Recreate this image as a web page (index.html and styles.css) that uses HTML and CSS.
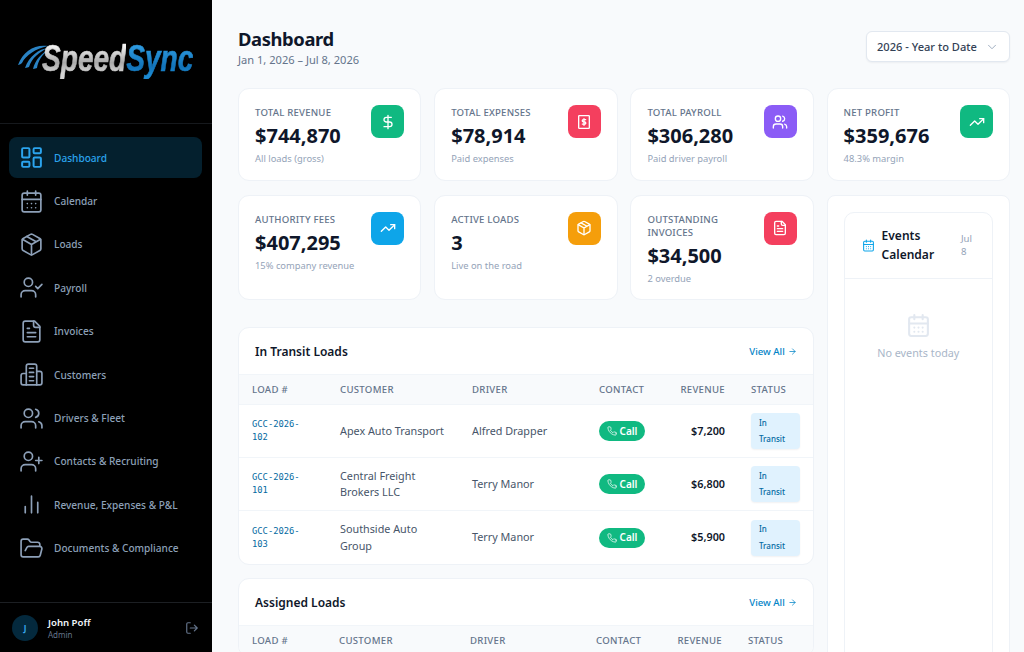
FILE: index.html
```html
<!DOCTYPE html>
<html lang="en">
<head>
    <meta charset="UTF-8">
    <meta name="viewport" content="width=device-width, initial-scale=1.0">
    <title>SpeedSync Dashboard</title>
    <link rel="stylesheet" href="styles.css">
</head>
<body>
    <!-- Icon sprite -->
    <svg class="sprite" xmlns="http://www.w3.org/2000/svg">
        <symbol id="i-dashboard" viewBox="0 0 24 24"><rect x="3" y="3" width="7" height="9" rx="1"/><rect x="14" y="3" width="7" height="5" rx="1"/><rect x="14" y="12" width="7" height="9" rx="1"/><rect x="3" y="16" width="7" height="5" rx="1"/></symbol>
        <symbol id="i-calendar" viewBox="0 0 24 24"><path d="M8 2v4M16 2v4"/><rect x="3" y="4" width="18" height="18" rx="2"/><path d="M3 10h18M8 14h.01M12 14h.01M16 14h.01M8 18h.01M12 18h.01M16 18h.01"/></symbol>
        <symbol id="i-box" viewBox="0 0 24 24"><path d="M21 8a2 2 0 0 0-1-1.73l-7-4a2 2 0 0 0-2 0l-7 4A2 2 0 0 0 3 8v8a2 2 0 0 0 1 1.73l7 4a2 2 0 0 0 2 0l7-4A2 2 0 0 0 21 16Z"/><path d="m7.5 4.27 9 5.15M3.29 7 12 12l8.71-5M12 22V12"/></symbol>
        <symbol id="i-user-check" viewBox="0 0 24 24"><path d="M16 21v-2a4 4 0 0 0-4-4H6a4 4 0 0 0-4 4v2"/><circle cx="9" cy="7" r="4"/><path d="m16 11 2 2 4-4"/></symbol>
        <symbol id="i-file" viewBox="0 0 24 24"><path d="M15 2H6a2 2 0 0 0-2 2v16a2 2 0 0 0 2 2h12a2 2 0 0 0 2-2V7Z"/><path d="M14 2v4a2 2 0 0 0 2 2h4M10 9H8M16 13H8M16 17H8"/></symbol>
        <symbol id="i-building" viewBox="0 0 24 24"><path d="M7 22V4a2 2 0 0 1 2-2h6a2 2 0 0 1 2 2v18Z"/><path d="M7 11H4a2 2 0 0 0-2 2v7a2 2 0 0 0 2 2h3M17 9h3a2 2 0 0 1 2 2v9a2 2 0 0 1-2 2h-3M10 6h4M10 10h4M10 14h4M10 18h4"/></symbol>
        <symbol id="i-users" viewBox="0 0 24 24"><path d="M16 21v-2a4 4 0 0 0-4-4H6a4 4 0 0 0-4 4v2"/><circle cx="9" cy="7" r="4"/><path d="M22 21v-2a4 4 0 0 0-3-3.87M16 3.13a4 4 0 0 1 0 7.75"/></symbol>
        <symbol id="i-user-plus" viewBox="0 0 24 24"><path d="M16 21v-2a4 4 0 0 0-4-4H6a4 4 0 0 0-4 4v2"/><circle cx="9" cy="7" r="4"/><path d="M19 8v6M22 11h-6"/></symbol>
        <symbol id="i-chart" viewBox="0 0 24 24"><path d="M18 20V10M12 20V4M6 20v-6"/></symbol>
        <symbol id="i-folder" viewBox="0 0 24 24"><path d="m6 14 1.5-2.9A2 2 0 0 1 9.24 10H20a2 2 0 0 1 1.94 2.5l-1.54 6a2 2 0 0 1-1.95 1.5H4a2 2 0 0 1-2-2V5a2 2 0 0 1 2-2h3.9a2 2 0 0 1 1.69.9l.81 1.2a2 2 0 0 0 1.67.9H18a2 2 0 0 1 2 2v2"/></symbol>
        <symbol id="i-logout" viewBox="0 0 24 24"><path d="M9 21H5a2 2 0 0 1-2-2V5a2 2 0 0 1 2-2h4M16 17l5-5-5-5M21 12H9"/></symbol>
        <symbol id="i-dollar" viewBox="0 0 24 24"><path d="M12 2v20M17 5H9.500a3.500 3.500 0 0 0 0 7h5a3.500 3.500 0 0 1 0 7H6"/></symbol>
        <symbol id="i-receipt" viewBox="0 0 24 24"><rect x="4" y="2.500" width="16" height="19" rx="1"/><path d="M14.500 8.500h-3.500a1.600 1.600 0 0 0 0 3.300h2a1.600 1.600 0 0 1 0 3.300H9.500M12 7v10"/></symbol>
        <symbol id="i-trend" viewBox="0 0 24 24"><path d="M22 7l-8.500 8.500-5-5L2 17"/><path d="M16 7h6v6"/></symbol>
        <symbol id="i-chevron" viewBox="0 0 24 24"><path d="m6 9 6 6 6-6"/></symbol>
        <symbol id="i-arrow" viewBox="0 0 24 24"><path d="M5 12h14M12 5l7 7-7 7"/></symbol>
        <symbol id="i-phone" viewBox="0 0 24 24"><path d="M22 16.920v3a2 2 0 0 1-2.180 2 19.790 19.790 0 0 1-8.630-3.070 19.500 19.500 0 0 1-6-6 19.790 19.790 0 0 1-3.070-8.670A2 2 0 0 1 4.110 2h3a2 2 0 0 1 2 1.720c.13.96.36 1.900.7 2.810a2 2 0 0 1-.45 2.110L8.090 9.910a16 16 0 0 0 6 6l1.270-1.270a2 2 0 0 1 2.110-.45c.91.34 1.850.57 2.810.7A2 2 0 0 1 22 16.920Z"/></symbol>
    </svg>

    <div class="app">
        <aside class="sidebar">
            <div class="logo">
                <svg class="logo-swoosh" viewBox="0 0 30 26" xmlns="http://www.w3.org/2000/svg">
                    <path d="M30 1C17 -1 5 6 0 20 3 19 3 19 4 18 8 10 17 4 30 1Z"/>
                    <path d="M30 3C21 4 11 11 7 23 9 23 10 22 11 22 14 13 21 7 30 3Z"/>
                    <path d="M30 5C24 8 17 15 15 24 17 24 18 23 19 23 20 16 24 10 30 5Z"/>
                </svg>
                <div class="logo-text"><span class="logo-speed">Speed</span><span class="logo-sync">Sync</span></div>
            </div>
            <nav class="nav">
                <a class="nav-item active"><svg class="nav-icon"><use href="#i-dashboard"/></svg>Dashboard</a>
                <a class="nav-item"><svg class="nav-icon"><use href="#i-calendar"/></svg>Calendar</a>
                <a class="nav-item"><svg class="nav-icon"><use href="#i-box"/></svg>Loads</a>
                <a class="nav-item"><svg class="nav-icon"><use href="#i-user-check"/></svg>Payroll</a>
                <a class="nav-item"><svg class="nav-icon"><use href="#i-file"/></svg>Invoices</a>
                <a class="nav-item"><svg class="nav-icon"><use href="#i-building"/></svg>Customers</a>
                <a class="nav-item"><svg class="nav-icon"><use href="#i-users"/></svg>Drivers &amp; Fleet</a>
                <a class="nav-item"><svg class="nav-icon"><use href="#i-user-plus"/></svg>Contacts &amp; Recruiting</a>
                <a class="nav-item"><svg class="nav-icon"><use href="#i-chart"/></svg>Revenue, Expenses &amp; P&amp;L</a>
                <a class="nav-item"><svg class="nav-icon"><use href="#i-folder"/></svg>Documents &amp; Compliance</a>
            </nav>
            <div class="user">
                <div class="avatar">J</div>
                <div class="user-info">
                    <div class="user-name">John Poff</div>
                    <div class="user-role">Admin</div>
                </div>
                <svg class="logout"><use href="#i-logout"/></svg>
            </div>
        </aside>

        <main class="main">
            <header class="page-head">
                <div>
                    <h1>Dashboard</h1>
                    <p class="page-date">Jan 1, 2026 – Jul 8, 2026</p>
                </div>
                <div class="period">2026 - Year to Date<svg class="period-arrow"><use href="#i-chevron"/></svg></div>
            </header>

            <section class="stats stats-four">
                <div class="stat">
                    <div class="stat-body">
                        <div class="stat-label">Total Revenue</div>
                        <div class="stat-value">$744,870</div>
                        <div class="stat-note">All loads (gross)</div>
                    </div>
                    <div class="stat-icon green"><svg><use href="#i-dollar"/></svg></div>
                </div>
                <div class="stat">
                    <div class="stat-body">
                        <div class="stat-label">Total Expenses</div>
                        <div class="stat-value">$78,914</div>
                        <div class="stat-note">Paid expenses</div>
                    </div>
                    <div class="stat-icon red"><svg><use href="#i-receipt"/></svg></div>
                </div>
                <div class="stat">
                    <div class="stat-body">
                        <div class="stat-label">Total Payroll</div>
                        <div class="stat-value">$306,280</div>
                        <div class="stat-note">Paid driver payroll</div>
                    </div>
                    <div class="stat-icon purple"><svg><use href="#i-users"/></svg></div>
                </div>
                <div class="stat">
                    <div class="stat-body">
                        <div class="stat-label">Net Profit</div>
                        <div class="stat-value">$359,676</div>
                        <div class="stat-note">48.3% margin</div>
                    </div>
                    <div class="stat-icon green"><svg><use href="#i-trend"/></svg></div>
                </div>
            </section>

            <div class="columns">
                <div class="left">
                    <section class="stats stats-three">
                        <div class="stat">
                            <div class="stat-body">
                                <div class="stat-label">Authority Fees</div>
                                <div class="stat-value">$407,295</div>
                                <div class="stat-note">15% company revenue</div>
                            </div>
                            <div class="stat-icon blue"><svg><use href="#i-trend"/></svg></div>
                        </div>
                        <div class="stat">
                            <div class="stat-body">
                                <div class="stat-label">Active Loads</div>
                                <div class="stat-value">3</div>
                                <div class="stat-note">Live on the road</div>
                            </div>
                            <div class="stat-icon orange"><svg><use href="#i-box"/></svg></div>
                        </div>
                        <div class="stat">
                            <div class="stat-body">
                                <div class="stat-label">Outstanding Invoices</div>
                                <div class="stat-value">$34,500</div>
                                <div class="stat-note">2 overdue</div>
                            </div>
                            <div class="stat-icon red"><svg><use href="#i-file"/></svg></div>
                        </div>
                    </section>

                    <section class="panel">
                        <div class="panel-head">
                            <h2>In Transit Loads</h2>
                            <a class="view-all">View All<svg><use href="#i-arrow"/></svg></a>
                        </div>
                        <table class="loads">
                            <colgroup><col class="c-load"><col class="c-cust"><col class="c-driver"><col class="c-contact"><col class="c-rev"><col class="c-status"></colgroup>
                            <thead>
                                <tr><th>Load #</th><th>Customer</th><th>Driver</th><th>Contact</th><th class="num">Revenue</th><th>Status</th></tr>
                            </thead>
                            <tbody>
                                <tr>
                                    <td class="load-id">GCC-2026-102</td>
                                    <td>Apex Auto Transport</td>
                                    <td>Alfred Drapper</td>
                                    <td><a class="call"><svg><use href="#i-phone"/></svg>Call</a></td>
                                    <td class="num money">$7,200</td>
                                    <td><span class="badge">In Transit</span></td>
                                </tr>
                                <tr>
                                    <td class="load-id">GCC-2026-101</td>
                                    <td>Central Freight Brokers LLC</td>
                                    <td>Terry Manor</td>
                                    <td><a class="call"><svg><use href="#i-phone"/></svg>Call</a></td>
                                    <td class="num money">$6,800</td>
                                    <td><span class="badge">In Transit</span></td>
                                </tr>
                                <tr>
                                    <td class="load-id">GCC-2026-103</td>
                                    <td>Southside Auto Group</td>
                                    <td>Terry Manor</td>
                                    <td><a class="call"><svg><use href="#i-phone"/></svg>Call</a></td>
                                    <td class="num money">$5,900</td>
                                    <td><span class="badge">In Transit</span></td>
                                </tr>
                            </tbody>
                        </table>
                    </section>

                    <section class="panel">
                        <div class="panel-head">
                            <h2>Assigned Loads</h2>
                            <a class="view-all">View All<svg><use href="#i-arrow"/></svg></a>
                        </div>
                        <table class="loads loads-assigned">
                            <colgroup><col class="c-load"><col class="c-cust"><col class="c-driver"><col class="c-contact"><col class="c-rev"><col class="c-status"></colgroup>
                            <thead>
                                <tr><th>Load #</th><th>Customer</th><th>Driver</th><th>Contact</th><th class="num">Revenue</th><th>Status</th></tr>
                            </thead>
                        </table>
                    </section>
                </div>

                <aside class="events-wrap">
                    <div class="events">
                        <div class="events-head">
                            <svg class="events-icon"><use href="#i-calendar"/></svg>
                            <h3>Events Calendar</h3>
                            <span class="events-date">Jul 8</span>
                        </div>
                        <div class="events-empty">
                            <svg><use href="#i-calendar"/></svg>
                            <p>No events today</p>
                        </div>
                    </div>
                </aside>
            </div>
        </main>
    </div>
</body>
</html>
```

FILE: styles.css
```css
* {
    box-sizing: border-box;
}
html, body {
    height: 100%;
    margin: 0;
    overflow: hidden;
}
body {
    font-family: 'Noto Sans', sans-serif;
    background: #f8fafc;
    color: #0f172a;
}
.sprite {
    display: none;
}
symbol {
    overflow: visible;
}
svg {
    fill: none;
    stroke: currentColor;
    stroke-width: 2;
    stroke-linecap: round;
    stroke-linejoin: round;
}
.app {
    display: flex;
    height: 652px;
}

/* Sidebar */
.sidebar {
    width: 212px;
    flex-shrink: 0;
    background: #000;
    display: flex;
    flex-direction: column;
}
.logo {
    height: 124px;
    border-bottom: 1px solid #16191d;
    display: flex;
    align-items: center;
    padding: 0 0 5px 18px;
}
.logo-swoosh {
    width: 30px;
    height: 26px;
    flex-shrink: 0;
    margin: -2px -6px 0 0;
    fill: #2a83c4;
    stroke: none;
}
.logo-text {
    font-family: 'Liberation Sans', sans-serif;
    font-size: 36px;
    font-weight: 700;
    font-style: italic;
    line-height: 40px;
    white-space: nowrap;
    transform: scaleX(0.78);
    transform-origin: left center;
    -webkit-text-stroke: 0.7px transparent;
}
.logo-speed {
    background: linear-gradient(180deg, #f2f2f2 20%, #a9a9a9 60%, #d5d5d5 85%);
    -webkit-background-clip: text;
    background-clip: text;
    color: transparent;
}
.logo-sync {
    background: linear-gradient(180deg, #2d9ae0 20%, #1273b8 70%, #1c8ad2 90%);
    -webkit-background-clip: text;
    background-clip: text;
    color: transparent;
}
.nav {
    padding: 13px 10px 0 9px;
    display: flex;
    flex-direction: column;
    gap: 2px;
}
.nav-item {
    height: 41.4px;
    display: flex;
    align-items: center;
    gap: 10px;
    padding-left: 10px;
    border-radius: 8px;
    font-size: 10.100px;
    font-weight: 500;
    color: #8da0b8;
}
.nav-item.active {
    background: #04202e;
    color: #2ba4ee;
}
.nav-item.active .nav-icon {
    stroke-width: 1.900;
}
.nav-icon {
    width: 25px;
    height: 25px;
    stroke-width: 1.600;
    flex-shrink: 0;
}
.user {
    margin-top: auto;
    height: 50px;
    border-top: 1px solid #1c1f23;
    display: flex;
    align-items: center;
    gap: 10px;
    padding: 0 13px 0 12px;
}
.avatar {
    width: 26px;
    height: 26px;
    border-radius: 50%;
    background: #04293d;
    color: #38a8ee;
    font-size: 8px;
    font-weight: 700;
    display: flex;
    align-items: center;
    justify-content: center;
}
.user-info {
    flex: 1;
}
.user-name {
    font-size: 9.600px;
    font-weight: 600;
    color: #f1f5f9;
    line-height: 13px;
}
.user-role {
    font-size: 8px;
    color: #64748b;
    line-height: 11px;
}
.logout {
    width: 14px;
    height: 14px;
    color: #64748b;
}

/* Main */
.main {
    flex: 1;
    min-width: 0;
    padding: 27px 14px 0 26px;
    overflow: hidden;
}
.page-head {
    display: flex;
    justify-content: space-between;
    align-items: flex-start;
    margin-bottom: 25px;
    height: 36px;
}
h1 {
    margin: 0;
    font-size: 18.400px;
    font-weight: 700;
    letter-spacing: -0.4px;
    line-height: 24px;
}
.page-date {
    margin: 1px 0 0;
    font-size: 11.100px;
    line-height: 16px;
    color: #64748b;
}
.period {
    margin-top: 4px;
    width: 144px;
    height: 31px;
    background: #fff;
    border: 1px solid #e2e8f0;
    border-radius: 6px;
    box-shadow: 0 1px 2px rgba(15, 23, 42, 0.05);
    display: flex;
    align-items: center;
    justify-content: space-between;
    padding: 0 10px 0 10px;
    font-size: 11.100px;
    font-weight: 500;
    color: #334155;
}
.period-arrow {
    width: 14px;
    height: 14px;
    color: #94a3b8;
    stroke-width: 1.500;
}
.stats {
    display: grid;
    gap: 12.800px;
}
.stats-four {
    grid-template-columns: repeat(4, 1fr);
    margin-bottom: 13.400px;
}
.stats-three {
    grid-template-columns: repeat(3, 1fr);
    margin-bottom: 27.500px;
}
.stat {
    background: #fff;
    border: 1px solid #eef2f7;
    border-radius: 11px;
    padding: 17px 16px 14px;
    display: flex;
    align-items: flex-start;
    justify-content: space-between;
    gap: 8px;
    min-height: 93.400px;
}
.stat-label {
    font-size: 9.600px;
    font-weight: 500;
    text-transform: uppercase;
    letter-spacing: 0.2px;
    color: #64748b;
    line-height: 13px;
}
.stat-value {
    font-size: 20px;
    font-weight: 700;
    line-height: 27px;
    margin-top: 3px;
}
.stat-note {
    font-size: 9.350px;
    color: #94a3b8;
    line-height: 13px;
    margin-top: 3px;
}
.stat-icon {
    width: 33px;
    height: 33px;
    flex-shrink: 0;
    margin-top: -1px;
    border-radius: 8px;
    color: #fff;
    display: flex;
    align-items: center;
    justify-content: center;
}
.stat-icon svg {
    width: 16px;
    height: 16px;
}
.green { background: #10b981; }
.red { background: #f43f5e; }
.purple { background: #8b5cf6; }
.blue { background: #0ea5e9; }
.orange { background: #f59e0b; }

.columns {
    display: flex;
    gap: 12.800px;
    align-items: flex-start;
}
.left {
    flex: 1;
    min-width: 0;
}

/* Load tables */
.panel {
    background: #fff;
    border: 1px solid #eef2f7;
    border-radius: 11px;
    margin-bottom: 13.500px;
    overflow: hidden;
}
.panel-head {
    height: 47px;
    display: flex;
    align-items: center;
    justify-content: space-between;
    padding: 0 16px;
    border-bottom: 1px solid #f1f5f9;
}
h2 {
    margin: 0;
    font-size: 12px;
    font-weight: 600;
}
.view-all {
    display: flex;
    align-items: center;
    gap: 3px;
    font-size: 9.600px;
    font-weight: 500;
    color: #0284c7;
}
.view-all svg {
    width: 9px;
    height: 9px;
}
.loads {
    width: 100%;
    border-collapse: collapse;
    table-layout: fixed;
}
.c-load { width: 88px; }
.c-cust { width: 132px; }
.c-driver { width: 127px; }
.c-contact { width: 80px; }
.c-rev { width: 72px; }
.c-status { width: auto; }
.loads-assigned .c-load { width: 87px; }
.loads-assigned .c-cust { width: 131px; }
.loads-assigned .c-driver { width: 126px; }
.loads-assigned .c-contact { width: 78px; }
.loads-assigned .c-rev { width: 74px; }
th {
    height: 29.500px;
    padding: 0 0 0 13px;
    background: #f8fafc;
    text-align: left;
    font-size: 9.600px;
    font-weight: 500;
    letter-spacing: 0.3px;
    text-transform: uppercase;
    color: #64748b;
    border-bottom: 1px solid #f1f5f9;
}
td {
    height: 53px;
    padding: 0 13px;
    font-size: 10.800px;
    line-height: 16.500px;
    color: #475569;
    border-bottom: 1px solid #f1f5f9;
}
tbody tr:last-child td {
    border-bottom: none;
}
th.num, td.num {
    text-align: right;
    padding: 0 13px 0 0;
}
td.load-id {
    font-family: 'DejaVu Sans Mono', monospace;
    font-size: 8.800px;
    line-height: 13px;
    color: #0369a1;
}
td.money {
    font-weight: 600;
    color: #0f172a;
}
.call {
    display: inline-flex;
    align-items: center;
    gap: 3px;
    height: 20px;
    width: 46px;
    justify-content: center;
    border-radius: 10px;
    background: #10b981;
    color: #fff;
    font-size: 10px;
    font-weight: 600;
}
.call svg {
    width: 10px;
    height: 10px;
    stroke-width: 1.800;
}
td:last-child {
    padding: 0 13px 0 13px;
}
.badge {
    display: block;
    width: 49px;
    padding: 1.500px 8px;
    background: #e0f2fe;
    color: #0369a1;
    border-radius: 4px;
    box-shadow: 0 1px 2px rgba(15, 23, 42, 0.06);
    font-size: 8px;
    font-weight: 500;
    line-height: 16.500px;
}

/* Events */
.events-wrap {
    width: 183.400px;
    flex-shrink: 0;
    height: 500px;
    background: #fff;
    border: 1px solid #eef2f7;
    border-radius: 8px;
    padding: 16px;
}
.events {
    height: 600px;
    border: 1px solid #eef2f7;
    border-radius: 10px;
}
.events-head {
    height: 66px;
    border-bottom: 1px solid #eef2f7;
    display: flex;
    align-items: center;
    padding: 0 15px 0 17px;
    gap: 7px;
}
.events-icon {
    width: 13px;
    height: 13px;
    flex-shrink: 0;
    color: #0ea5e9;
}
h3 {
    margin: 0;
    font-size: 12px;
    font-weight: 600;
    line-height: 19.500px;
    flex: 1;
}
.events-date {
    font-size: 9.600px;
    line-height: 13px;
    color: #94a3b8;
    width: 16px;
}
.events-empty {
    padding-top: 34px;
    text-align: center;
    color: #e2e8f0;
}
.events-empty svg {
    width: 25px;
    height: 25px;
}
.events-empty p {
    margin: 2px 0 0;
    font-size: 10.800px;
    color: #a9b6c8;
}
```
